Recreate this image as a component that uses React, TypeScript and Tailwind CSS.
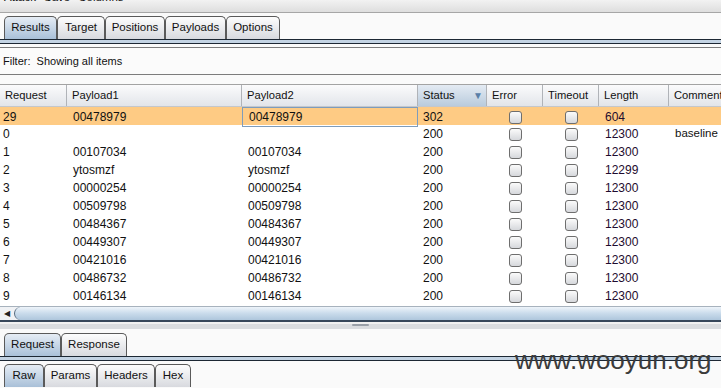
import React from 'react';

const rows = [
  ['29', '00478979', '00478979', '302', '604', ''],
  ['0', '', '', '200', '12300', 'baseline request'],
  ['1', '00107034', '00107034', '200', '12300', ''],
  ['2', 'ytosmzf', 'ytosmzf', '200', '12299', ''],
  ['3', '00000254', '00000254', '200', '12300', ''],
  ['4', '00509798', '00509798', '200', '12300', ''],
  ['5', '00484367', '00484367', '200', '12300', ''],
  ['6', '00449307', '00449307', '200', '12300', ''],
  ['7', '00421016', '00421016', '200', '12300', ''],
  ['8', '00486732', '00486732', '200', '12300', ''],
  ['9', '00146134', '00146134', '200', '12300', ''],
];

const cols = 'grid grid-cols-[67px_175px_176px_69px_56px_56px_70px_1fr]';

const Tab = ({ label, active, w }: { label: string; active?: boolean; w: string }) => (
  <div
    className={`${w} h-[23px] flex items-center justify-center border border-b-0 border-[#5a5a5a] rounded-t-[5px] text-[11.5px] text-[#111] ${
      active ? 'bg-gradient-to-b from-[#e6edf5] to-[#a9c0d8]' : 'bg-gradient-to-b from-[#fdfdfd] to-[#d8dadf]'
    }`}
  >
    {label}
  </div>
);

const Strip = () => (
  <div className="h-[5px] border-y border-[#1c2733] bg-[#c3d3e3]" />
);

const Check = () => (
  <div className="flex items-center justify-center">
    <div className="w-[13px] h-[13px] rounded-[3px] border border-[#6e6e6e] bg-gradient-to-b from-[#fbfbfb] to-[#d6d8dc]" />
  </div>
);

export default function App() {
  return (
    <div className="relative w-[721px] h-[388px] overflow-hidden bg-[#fafafa] text-[12px] text-[#111]" style={{ fontFamily: '"Liberation Sans", Arial, sans-serif' }}>
      {/* menu bar, scrolled so only the lower part of the labels shows */}
      <div className="h-[13px] overflow-hidden border-b border-[#a6a6a6] bg-gradient-to-b from-[#f2f2f2] to-[#dedede]">
        <div className="flex gap-[8px] px-[4px] -mt-[11px] leading-[16px] text-[11.5px]">
          <span>Attack</span>
          <span>Save</span>
          <span>Columns</span>
        </div>
      </div>

      {/* top tabs */}
      <div className="flex pl-[4px] pt-[3px]">
        <Tab label="Results" active w="w-[53px]" />
        <Tab label="Target" w="w-[48px]" />
        <Tab label="Positions" w="w-[60px]" />
        <Tab label="Payloads" w="w-[61px]" />
        <Tab label="Options" w="w-[54px]" />
      </div>
      <Strip />

      <div className="h-[3px]" />
      <div className="h-[28px] border-y border-[#7c7c7c] flex items-center px-[3px] bg-[#fbfbfb] text-[11px]">
        Filter:&nbsp; Showing all items
      </div>
      <div className="h-[9px]" />

      {/* table */}
      <div className="h-[222px] bg-white border-t border-[#a3a3a3]">
        <div className={`${cols} h-[22px] border-b border-[#c4c7cc] bg-gradient-to-b from-[#fbfbfc] to-[#e2e5ea] text-[11.2px]`}>
          {['Request', 'Payload1', 'Payload2', 'Status', 'Error', 'Timeout', 'Length', 'Comment'].map((h, i) => (
            <div
              key={h}
              className={`flex items-center pl-[5px] whitespace-nowrap ${i < 7 ? 'border-r border-[#b0b3b8]' : ''} ${
                i === 3 ? 'bg-gradient-to-b from-[#e4ebf3] to-[#b9cbdd] justify-between pr-[3px]' : ''
              }`}
            >
              <span>{h}</span>
              {i === 3 && <span className="text-[10px] text-[#5a7fa8]">▼</span>}
            </div>
          ))}
        </div>
        {rows.map((r, idx) => (
          <div key={idx} className={`${cols} h-[18px] ${idx === 0 ? 'bg-[#fecb84]' : ''}`}>
            <div className="flex items-center pl-[3px]">{r[0]}</div>
            <div className="flex items-center pl-[6px]">{r[1]}</div>
            <div className={`flex items-center pl-[6px] ${idx === 0 ? 'border border-[#7e9cbb] pl-[5px]' : ''}`}>{r[2]}</div>
            <div className="flex items-center pl-[5px]">{r[3]}</div>
            <Check />
            <Check />
            <div className="flex items-center pl-[6px] text-[#1e0b2e]">{r[4]}</div>
            <div className="flex items-center pl-[6px] whitespace-nowrap text-[11.5px]">{r[5]}</div>
          </div>
        ))}
      </div>

      {/* horizontal scrollbar */}
      <div className="h-[16px] flex border-t border-[#a7b2bd] border-b-2 border-b-[#37475a] bg-[#f0f2f5]">
        <div className="w-[14px] flex items-center justify-center text-[8px] text-[#222]">◀</div>
        <div className="flex-1 rounded-l-[8px] border-l border-[#51657a] bg-gradient-to-b from-[#eef4fa] via-[#c9dbeb] to-[#aec6dc]" />
      </div>

      {/* splitter */}
      <div className="h-[7px] bg-[#f1f1f1] flex flex-col">
        <div className="h-[2px]" />
        <div className="h-[5px] bg-[#dadcdf] flex justify-center">
          <div className="w-[17px] h-[2px] bg-[#9aa0a8] rounded-full" />
        </div>
      </div>

      {/* lower tabs */}
      <div className="flex pl-[4px] pt-[4px]">
        <Tab label="Request" active w="w-[57px]" />
        <Tab label="Response" w="w-[66px]" />
      </div>
      <Strip />

      <div className="flex pl-[4px] pt-[3px]">
        <Tab label="Raw" active w="w-[40px]" />
        <Tab label="Params" w="w-[53px]" />
        <Tab label="Headers" w="w-[58px]" />
        <Tab label="Hex" w="w-[36px]" />
      </div>

      {/* watermark */}
      <div className="absolute left-[515px] top-[344px] text-[26px] leading-[32px] text-[#3b3b3b]">
        www.wooyun.org
      </div>
    </div>
  );
}
